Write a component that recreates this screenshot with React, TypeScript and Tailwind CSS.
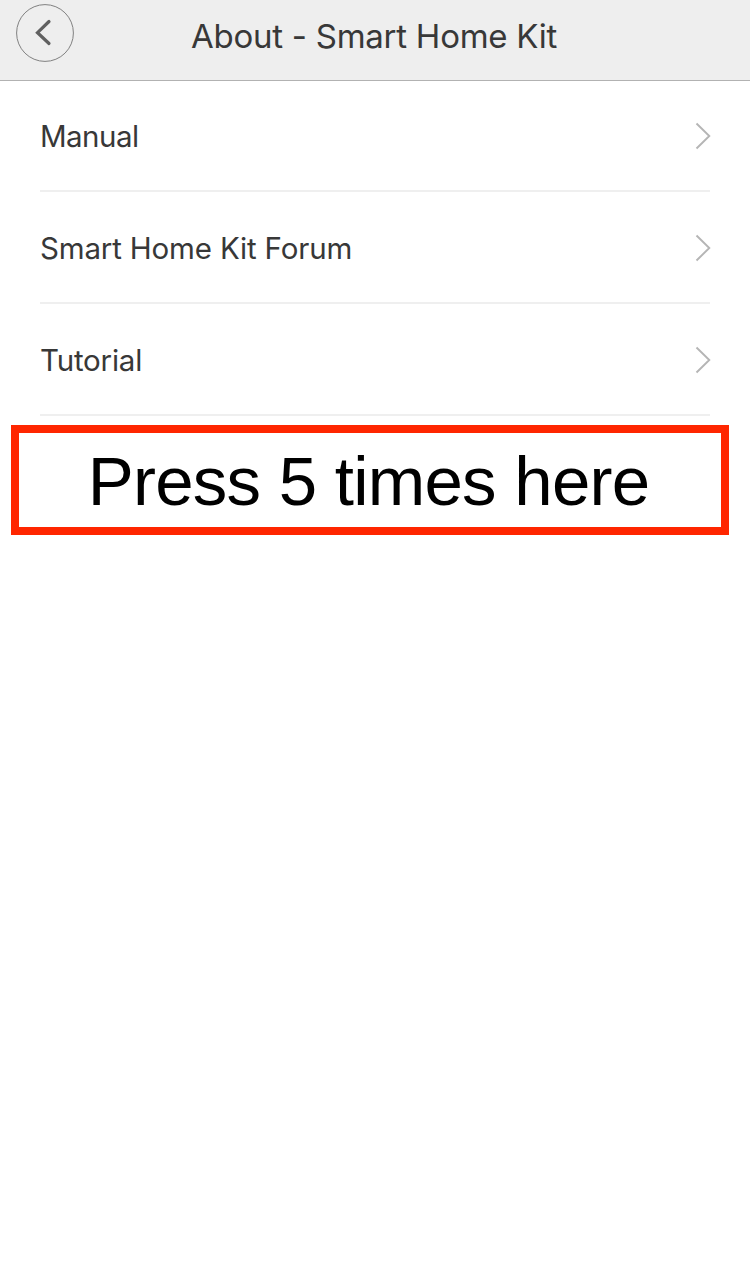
const rows = [
  { label: "Manual", tracking: "tracking-[-0.55px]" },
  { label: "Smart Home Kit Forum", tracking: "tracking-[-0.17px]" },
  { label: "Tutorial", tracking: "tracking-[-0.2px]" },
];

export default function App() {
  return (
    <div className="flex h-[1286px] w-[750px] flex-col bg-white font-['Inter',sans-serif] text-[#383838]">
      <header className="grid h-[81px] shrink-0 grid-cols-[74px_1fr_74px] border-b border-[#b2b2b2] bg-[#eeeeee]">
        <button aria-label="Back" className="mt-1 ml-4 h-[58px] w-[58px]">
          <svg width="58" height="58" viewBox="0 0 58 58" fill="none">
            <circle cx="29" cy="29" r="28.4" stroke="#808080" strokeWidth="1" />
            <path d="M33 17.5 21.5 28.7 33 39.5" stroke="#606060" strokeWidth="3.2" strokeLinecap="round" />
          </svg>
        </button>
        <h1 className="pt-[12px] pr-[2px] text-center text-[33px] leading-[48px] font-normal tracking-[-0.25px] whitespace-nowrap">
          About - Smart Home Kit
        </h1>
      </header>
      <ul className="-mt-px px-10">
        {rows.map((row) => (
          <li key={row.label} className="flex h-[112px] items-center justify-between border-b-2 border-[#efefef] pt-[2px]">
            <span className={`text-[29.5px] leading-[40px] font-normal whitespace-nowrap ${row.tracking}`}>
              {row.label}
            </span>
            <svg className="-mr-px" width="16" height="28" viewBox="0 0 16 28" fill="none">
              <path d="M1.5 1.5 14.3 14 1.5 26.5" stroke="#b5b5b5" strokeWidth="1.9" />
            </svg>
          </li>
        ))}
      </ul>
      <div className="mt-[9px] ml-[11px] flex h-[110px] w-[718px] items-center justify-center border-[8px] border-[#ff2600] pt-[3px] pr-[3px] font-['Liberation_Sans',sans-serif] text-[69px] leading-none tracking-[-0.75px] whitespace-nowrap text-black">
        Press 5 times here
      </div>
    </div>
  );
}
